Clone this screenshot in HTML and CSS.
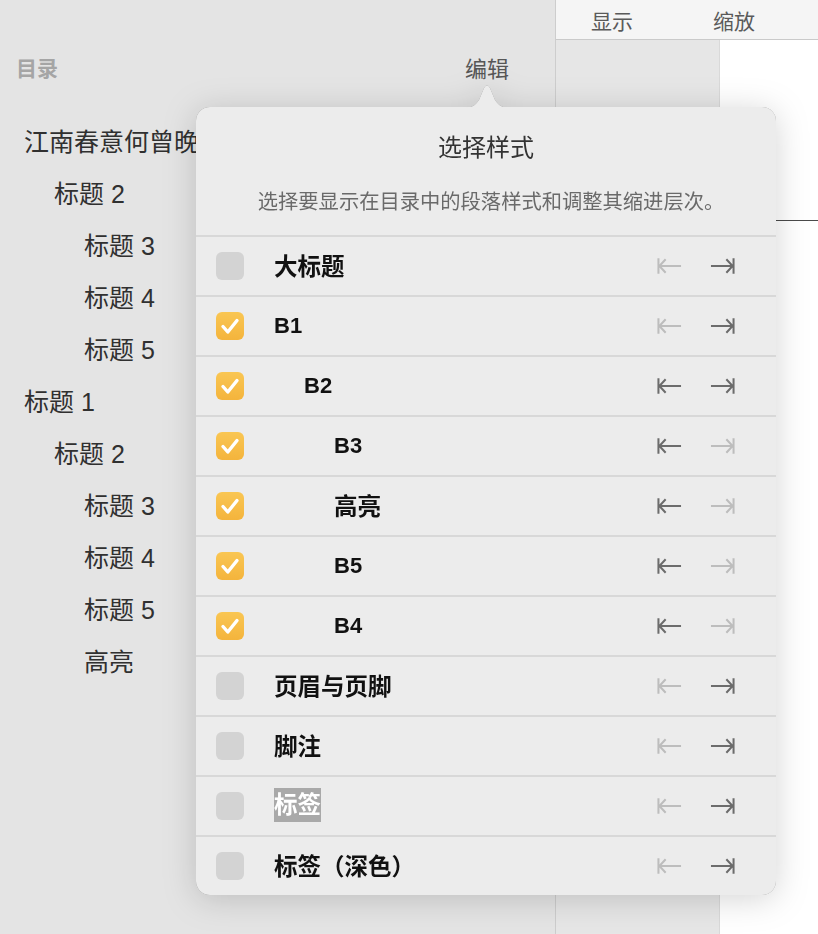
FILE: index.html
```html
<!DOCTYPE html>
<html lang="zh">
<head>
<meta charset="utf-8">
<title>目录</title>
<link rel="stylesheet" href="styles.css">
</head>
<body>
<div class="app">
  <aside class="sidebar">
    <header class="side-head">
      <span class="side-title">目录</span>
      <span class="side-edit">编辑</span>
    </header>
    <ul class="toc">
      <li class="lv0">江南春意何曾晚</li>
      <li class="lv1">标题 2</li>
      <li class="lv2">标题 3</li>
      <li class="lv2">标题 4</li>
      <li class="lv2">标题 5</li>
      <li class="lv0">标题 1</li>
      <li class="lv1">标题 2</li>
      <li class="lv2">标题 3</li>
      <li class="lv2">标题 4</li>
      <li class="lv2">标题 5</li>
      <li class="lv2">高亮</li>
    </ul>
  </aside>
  <main class="main">
    <div class="toolbar"><span>显示</span><span>缩放</span></div>
    <div class="canvas">
      <div class="gutter"></div>
      <div class="page"><div class="rule"></div></div>
    </div>
  </main>

  <div class="popover">
    <svg class="pop-arrow" width="48" height="25" viewBox="0 0 48 25"><path d="M0 25 C8 25 12 23 16 17 L21 5 Q24 -0.5 27 5 L32 17 C36 23 40 25 48 25 Z" fill="#ececec"/></svg>
    <div class="pop-body">
      <div class="pop-head">
        <div class="pop-title">选择样式</div>
        <div class="pop-sub">选择要显示在目录中的段落样式和调整其缩进层次。</div>
      </div>
      <ul class="styles">
        <li class="row">
          <span class="cb"></span><span class="label cjk">大标题</span>
          <span class="arrows"><svg class="ic off" viewBox="0 0 26 18"><path d="M1.5 1V17M2.5 9H25M9 2L2.5 9L9 16"/></svg><svg class="ic" viewBox="0 0 26 18"><path d="M24.5 1V17M1 9H23.5M17 2L23.5 9L17 16"/></svg></span>
        </li>
        <li class="row">
          <span class="cb on"><svg viewBox="0 0 28 28"><path d="M7 14.5L11.8 20L21 8.5"/></svg></span><span class="label">B1</span>
          <span class="arrows"><svg class="ic off" viewBox="0 0 26 18"><path d="M1.5 1V17M2.5 9H25M9 2L2.5 9L9 16"/></svg><svg class="ic" viewBox="0 0 26 18"><path d="M24.5 1V17M1 9H23.5M17 2L23.5 9L17 16"/></svg></span>
        </li>
        <li class="row">
          <span class="cb on"><svg viewBox="0 0 28 28"><path d="M7 14.5L11.8 20L21 8.5"/></svg></span><span class="label ind1">B2</span>
          <span class="arrows"><svg class="ic" viewBox="0 0 26 18"><path d="M1.5 1V17M2.5 9H25M9 2L2.5 9L9 16"/></svg><svg class="ic" viewBox="0 0 26 18"><path d="M24.5 1V17M1 9H23.5M17 2L23.5 9L17 16"/></svg></span>
        </li>
        <li class="row">
          <span class="cb on"><svg viewBox="0 0 28 28"><path d="M7 14.5L11.8 20L21 8.5"/></svg></span><span class="label ind2">B3</span>
          <span class="arrows"><svg class="ic" viewBox="0 0 26 18"><path d="M1.5 1V17M2.5 9H25M9 2L2.5 9L9 16"/></svg><svg class="ic off" viewBox="0 0 26 18"><path d="M24.5 1V17M1 9H23.5M17 2L23.5 9L17 16"/></svg></span>
        </li>
        <li class="row">
          <span class="cb on"><svg viewBox="0 0 28 28"><path d="M7 14.5L11.8 20L21 8.5"/></svg></span><span class="label cjk ind2">高亮</span>
          <span class="arrows"><svg class="ic" viewBox="0 0 26 18"><path d="M1.5 1V17M2.5 9H25M9 2L2.5 9L9 16"/></svg><svg class="ic off" viewBox="0 0 26 18"><path d="M24.5 1V17M1 9H23.5M17 2L23.5 9L17 16"/></svg></span>
        </li>
        <li class="row">
          <span class="cb on"><svg viewBox="0 0 28 28"><path d="M7 14.5L11.8 20L21 8.5"/></svg></span><span class="label ind2">B5</span>
          <span class="arrows"><svg class="ic" viewBox="0 0 26 18"><path d="M1.5 1V17M2.5 9H25M9 2L2.5 9L9 16"/></svg><svg class="ic off" viewBox="0 0 26 18"><path d="M24.5 1V17M1 9H23.5M17 2L23.5 9L17 16"/></svg></span>
        </li>
        <li class="row">
          <span class="cb on"><svg viewBox="0 0 28 28"><path d="M7 14.5L11.8 20L21 8.5"/></svg></span><span class="label ind2">B4</span>
          <span class="arrows"><svg class="ic" viewBox="0 0 26 18"><path d="M1.5 1V17M2.5 9H25M9 2L2.5 9L9 16"/></svg><svg class="ic off" viewBox="0 0 26 18"><path d="M24.5 1V17M1 9H23.5M17 2L23.5 9L17 16"/></svg></span>
        </li>
        <li class="row">
          <span class="cb"></span><span class="label cjk">页眉与页脚</span>
          <span class="arrows"><svg class="ic off" viewBox="0 0 26 18"><path d="M1.5 1V17M2.5 9H25M9 2L2.5 9L9 16"/></svg><svg class="ic" viewBox="0 0 26 18"><path d="M24.5 1V17M1 9H23.5M17 2L23.5 9L17 16"/></svg></span>
        </li>
        <li class="row">
          <span class="cb"></span><span class="label cjk">脚注</span>
          <span class="arrows"><svg class="ic off" viewBox="0 0 26 18"><path d="M1.5 1V17M2.5 9H25M9 2L2.5 9L9 16"/></svg><svg class="ic" viewBox="0 0 26 18"><path d="M24.5 1V17M1 9H23.5M17 2L23.5 9L17 16"/></svg></span>
        </li>
        <li class="row">
          <span class="cb"></span><span class="label cjk"><span class="tag">标签</span></span>
          <span class="arrows"><svg class="ic off" viewBox="0 0 26 18"><path d="M1.5 1V17M2.5 9H25M9 2L2.5 9L9 16"/></svg><svg class="ic" viewBox="0 0 26 18"><path d="M24.5 1V17M1 9H23.5M17 2L23.5 9L17 16"/></svg></span>
        </li>
        <li class="row">
          <span class="cb"></span><span class="label cjk">标签（深色）</span>
          <span class="arrows"><svg class="ic off" viewBox="0 0 26 18"><path d="M1.5 1V17M2.5 9H25M9 2L2.5 9L9 16"/></svg><svg class="ic" viewBox="0 0 26 18"><path d="M24.5 1V17M1 9H23.5M17 2L23.5 9L17 16"/></svg></span>
        </li>
      </ul>
    </div>
  </div>
</div>
</body>
</html>
```

FILE: styles.css
```css
* { box-sizing: border-box; }
html, body { margin: 0; padding: 0; }
body {
  font-family: "Liberation Sans", "Noto Sans CJK SC", sans-serif;
  background: #e4e4e4;
  color: #333;
}
ul { list-style: none; margin: 0; padding: 0; }

.app {
  position: relative;
  display: grid;
  grid-template-columns: 556px 1fr;
  width: 818px;
  height: 934px;
  overflow: hidden;
}

/* sidebar */
.sidebar {
  background: #e4e4e4;
  border-right: 1px solid #cdcdcd;
}
.side-head {
  display: flex;
  justify-content: space-between;
  align-items: center;
  height: 40px;
  margin-top: 47px;
  padding: 0 46px 0 16px;
}
.side-title {
  font-size: 21px;
  font-weight: bold;
  color: #a5a5a5;
}
.side-edit {
  font-size: 22px;
  color: #575757;
}
.toc {
  margin-top: 29px;
}
.toc li {
  height: 52px;
  line-height: 52px;
  font-size: 25px;
  color: #303030;
  white-space: nowrap;
}
.toc .lv0 { padding-left: 24px; }
.toc .lv1 { padding-left: 54px; }
.toc .lv2 { padding-left: 84px; }

/* main */
.main {
  display: flex;
  flex-direction: column;
}
.toolbar {
  height: 40px;
  background: #f5f5f5;
  border-bottom: 1px solid #cacaca;
  display: flex;
  align-items: center;
  gap: 80px;
  padding-left: 35px;
  font-size: 21px;
  color: #5a5a5a;
}
.canvas {
  flex: 1;
  display: flex;
}
.gutter {
  width: 164px;
  background: #e6e6e6;
  border-right: 1px solid #d9d9d9;
}
.page {
  flex: 1;
  background: #ffffff;
}
.rule {
  margin-top: 180px;
  border-top: 1px solid #4a4a4a;
}

/* popover */
.popover {
  position: absolute;
  left: 196px;
  top: 107px;
  width: 580px;
  filter: drop-shadow(0 0 0.6px rgba(0, 0, 0, 0.4)) drop-shadow(0 4px 16px rgba(0, 0, 0, 0.17));
}
.pop-arrow {
  position: absolute;
  left: 267px;
  top: -24px;
  display: block;
}
.pop-body {
  background: #ececec;
  border-radius: 14px;
  overflow: hidden;
}
.pop-head {
  height: 128px;
  display: flex;
  flex-direction: column;
  align-items: center;
}
.pop-title {
  margin-top: 25px;
  line-height: 32px;
  font-size: 24px;
  color: #333;
}
.pop-sub {
  margin-top: 24px;
  margin-left: 10px;
  line-height: 28px;
  font-size: 20.3px;
  color: #6a6a6a;
}
.row {
  height: 60px;
  border-top: 2px solid #d8d8d8;
  display: flex;
  align-items: center;
  padding: 0 41px 0 20px;
}
.cb {
  width: 28px;
  height: 28px;
  border-radius: 6px;
  background: #d3d3d3;
  flex: none;
  display: flex;
}
.cb.on {
  background: linear-gradient(#f9c653, #f4b43c);
}
.cb svg {
  width: 28px;
  height: 28px;
  fill: none;
  stroke: #fff;
  stroke-width: 3.4;
  stroke-linecap: round;
  stroke-linejoin: round;
}
.label {
  margin-left: 30px;
  font-size: 22px;
  font-weight: bold;
  color: #111;
  white-space: nowrap;
}
.label.cjk {
  font-size: 23.5px;
  margin-top: -3px;
}
.label.ind1 { margin-left: 60px; }
.label.ind2 { margin-left: 90px; }
.tag {
  background: #a9a9a9;
  color: #fff;
  display: inline-block;
  line-height: 34px;
}
.arrows {
  margin-left: auto;
  display: flex;
  gap: 28px;
  align-items: center;
}
.ic {
  width: 25px;
  height: 18px;
  fill: none;
  stroke: #6c6c6c;
  stroke-width: 2.1;
}
.ic.off {
  stroke: #bdbdbd;
}
```
